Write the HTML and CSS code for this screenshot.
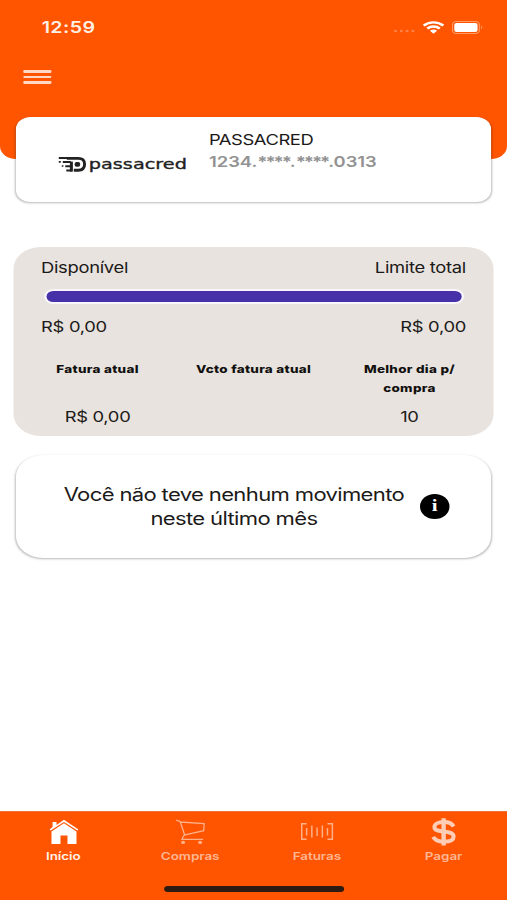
FILE: index.html
```html
<!DOCTYPE html>
<html lang="pt-BR">
<head>
<meta charset="utf-8">
<title>Passacred</title>
<link rel="stylesheet" href="styles.css">
</head>
<body>
<div class="screen">
  <header class="header">
    <div class="status">
      <span class="time">12:59</span>
      <div class="indicators">
        <svg class="dots" viewBox="0 0 18 4"><circle cx="2" cy="2" r="1.3"/><circle cx="6.7" cy="2" r="1.3"/><circle cx="11.4" cy="2" r="1.3"/><circle cx="16.1" cy="2" r="1.3"/></svg>
        <svg class="wifi" viewBox="0 0 18 13"><path d="M1 4.6a11.3 11.3 0 0 1 16 0M3.9 7.6a7.2 7.2 0 0 1 10.2 0" fill="none" stroke="#fff" stroke-width="2.3"/><path d="M6.1 9.8a4.2 4.2 0 0 1 5.8 0L9 12.8z" fill="#fff"/></svg>
        <svg class="battery" viewBox="0 0 26 13" preserveAspectRatio="none"><rect x=".5" y=".5" width="22.8" height="12" rx="3.2" fill="none" stroke="#ff9a66"/><rect x="2" y="2" width="19.8" height="9" rx="2" fill="#fff"/><path d="M24.8 4.6q1.2.6 1.2 1.9t-1.2 1.9z" fill="#ff9a66"/></svg>
      </div>
    </div>
    <div class="menu"><i></i><i></i><i></i></div>
  </header>

  <main>
    <section class="card account">
      <svg class="logo" viewBox="0 0 128 20" preserveAspectRatio="none">
        <g fill="none" stroke="#222">
          <path d="M8 4.4H19.5Q25.8 4.4 25.8 10.3T19.5 16.2H15" stroke-width="2.9"/>
          <path d="M12.6 17.6V7.6" stroke-width="3"/>
          <path d="M0 3.9H9M4 8H12M6.5 12.2H12M7.5 16.4H13" stroke-width="2"/>
          <path d="M0 7.9H2M3 12H4.6" stroke-width="1.6"/>
        </g>
        <rect x="15.8" y="7.9" width="5.6" height="4.8" rx="2" fill="#222"/>
        <text x="30" y="14.8" textLength="98" lengthAdjust="spacingAndGlyphs">passacred</text>
      </svg>
      <div class="holder">
        <div class="name">PASSACRED</div>
        <div class="number">1234.<span class="mask">****</span>.<span class="mask">****</span>.0313</div>
      </div>
    </section>

    <section class="summary">
      <div class="row"><span>Disponível</span><span>Limite total</span></div>
      <div class="track"><div class="fill"></div></div>
      <div class="row amounts"><span>R$ 0,00</span><span>R$ 0,00</span></div>
      <div class="columns">
        <div class="column"><h3>Fatura atual</h3><p>R$ 0,00</p></div>
        <div class="column"><h3>Vcto fatura atual</h3></div>
        <div class="column"><h3>Melhor dia p/<br>compra</h3><p>10</p></div>
      </div>
    </section>

    <section class="card notice">
      <p>Você não teve nenhum movimento<br>neste último mês</p>
      <span class="info">i</span>
    </section>
  </main>

  <nav class="tabs">
    <div class="tab active">
      <svg viewBox="0 0 30 28" preserveAspectRatio="none"><path d="M3.6 4H7.5V7L15 1.8 29.5 11.4 28.4 12.6 15 3.9 1.6 12.6.5 11.4 3.6 9z" fill="#fff"/><path d="M15 5.3L27.5 13.6V26H18.5V17.5H11.5V26H2.5V13.6z" fill="#fff"/></svg>
      <span>Início</span>
    </div>
    <div class="tab">
      <svg viewBox="0 0 30 28" preserveAspectRatio="none"><g fill="none" stroke="#ffb088" stroke-width="1.3"><path d="M.8 2L5 3.6 9.6 17M5 4L29 5.7 28.6 12.6 9 17 6.8 21.4H28"/></g><ellipse cx="8" cy="24.4" rx="2" ry="1.6" fill="#ffb088"/><ellipse cx="25" cy="24.4" rx="2" ry="1.6" fill="#ffb088"/></svg>
      <span>Compras</span>
    </div>
    <div class="tab">
      <svg class="barcode" viewBox="0 0 34 28" preserveAspectRatio="none"><g fill="none" stroke="#ffb088" stroke-width="1.5"><path d="M6.6 5.8H1.7V21.2H6.6M27.4 5.8H32.3V21.2H27.4"/><path d="M6.6 10V17.5M11.8 7.5V19.5M17 9.5V18M22.3 7.5V19.5M27.4 10V17.5"/></g></svg>
      <span>Faturas</span>
    </div>
    <div class="tab">
      <svg viewBox="0 0 30 28" preserveAspectRatio="none"><path d="M25 8.4C23.4 5.6 20 4 15.2 4 9.6 4 5.8 6 5.8 9.2 5.8 15.8 25 11.2 25 18.4 25 21.8 21 23.6 15.2 23.6 9.8 23.6 6.2 22 4.6 18.8" fill="none" stroke="#ffcdb5" stroke-width="4"/><path d="M15 .2V27.6" stroke="#ffcdb5" stroke-width="4.4"/></svg>
      <span>Pagar</span>
    </div>
    <div class="home-bar"></div>
  </nav>
</div>
</body>
</html>
```

FILE: styles.css
```css
* { box-sizing: border-box; margin: 0; padding: 0; }

html, body { width: 507px; height: 900px; overflow: hidden; background: #fff; }

/* 414-point layout stretched to the full window width */
.screen {
  width: 414px;
  height: 900px;
  display: flex;
  flex-direction: column;
  transform: scaleX(1.22464);
  transform-origin: 0 0;
  font-family: Inter, "Liberation Sans", sans-serif;
  color: #1c1a19;
  background: #fff;
}

.header { height: 159px; flex: none; background: #ff5400; border-radius: 0 0 13px 13px; }

.status { height: 54px; padding: 0 20px 0 34px; display: flex; align-items: center; justify-content: space-between; }
.time { font-size: 16px; font-weight: 600; letter-spacing: .35px; color: #fff0e6; }
.indicators { display: flex; align-items: center; }
.indicators svg { display: block; }
.dots { width: 18px; height: 4px; margin: 8px 6px 0 0; fill: #ff8045; }
.wifi { width: 18px; height: 13px; margin-right: 6px; }
.battery { width: 25px; height: 13px; }

.menu { width: 22.5px; margin: 16px 0 0 19px; display: flex; flex-direction: column; gap: 3px; }
.menu i { height: 2.6px; background: #ffd9c4; border-radius: 1px; }

main { flex: 1; margin-top: -42px; padding: 0 12px; }

.card { margin: 0 1px; background: #fff; box-shadow: 0 1px 2px rgba(0, 0, 0, .28); }

.account { height: 85px; border-radius: 12px; display: flex; padding: 12px 0 0 35px; }
.logo { width: 104.6px; height: 20px; margin-top: 25px; overflow: visible; }
.logo text { font-family: "DejaVu Sans", sans-serif; font-size: 14.5px; fill: #222; stroke: #222; stroke-width: .35px; }
.holder { margin-left: 18px; }
.name { font-size: 15px; line-height: 21px; letter-spacing: -.35px; }
.number { font-size: 15px; line-height: 24px; font-weight: 600; letter-spacing: 0; color: #929292; }
.mask { letter-spacing: -1.75px; font-weight: 700; }

.summary { height: 189px; margin: 45px -1px 0; padding: 10px 4px 0; border-radius: 22px; background: #e8e3de; font-size: 15px; letter-spacing: -.25px; }
.row { display: flex; justify-content: space-between; padding: 0 18.5px; line-height: 22px; }
.track { height: 15px; margin: 10px 20.5px 0 21px; padding: 2px; border-radius: 8px; background: #f8f6fb; }
.fill { height: 11px; border-radius: 6px; background: #4631a8; }
.amounts { margin-top: 12px; }
.columns { display: grid; grid-template-columns: repeat(3, 1fr); margin: 22px 1px 0; height: 68px; }
.column { display: flex; flex-direction: column; align-items: center; justify-content: space-between; text-align: center; }
.column h3 { font-size: 11px; line-height: 19px; font-weight: 800; letter-spacing: .23px; color: #11100f; }
.column p { line-height: 22px; }

.notice { height: 103px; margin-top: 19px; border-radius: 22px; display: flex; align-items: center; padding-left: 38px; }
.notice p { width: 280px; font-size: 18px; line-height: 23.5px; letter-spacing: -.53px; text-align: center; white-space: nowrap; }
.info { width: 24px; height: 24.5px; margin-left: 12px; border-radius: 50%; background: #000; color: #fff; font: 700 17px/24px "Liberation Serif", serif; text-align: center; }

.tabs { position: relative; flex: none; height: 89px; background: #ff5400; border-top: 1px solid #eb7136; display: grid; grid-template-columns: repeat(4, 1fr); }
.tab { display: flex; flex-direction: column; align-items: center; padding-top: 6px; color: #ffb692; font-size: 11px; font-weight: 600; line-height: 16px; letter-spacing: -.05px; }
.tab svg { width: 24.5px; height: 28px; margin-bottom: 2px; }
.tab .barcode { width: 27.8px; }
.active { color: #fff0e8; }
.home-bar { position: absolute; left: 134px; top: 74px; width: 147px; height: 6px; border-radius: 3px; background: #2b1b12; }
```
